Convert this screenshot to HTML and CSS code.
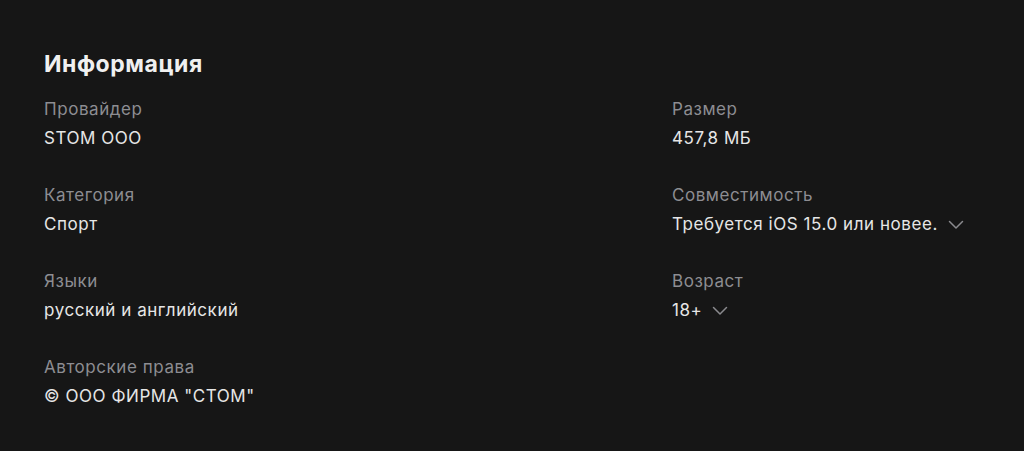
FILE: index.html
```html
<!DOCTYPE html>
<html lang="ru">
<head>
<meta charset="utf-8">
<link rel="stylesheet" href="styles.css">
</head>
<body>
<section class="info">
  <h2 class="info-title">Информация</h2>
  <div class="info-grid">
    <div class="info-item">
      <div class="info-label">Провайдер</div>
      <div class="info-value">STOM OOO</div>
    </div>
    <div class="info-item">
      <div class="info-label">Размер</div>
      <div class="info-value">457,8 МБ</div>
    </div>
    <div class="info-item">
      <div class="info-label">Категория</div>
      <div class="info-value">Спорт</div>
    </div>
    <div class="info-item">
      <div class="info-label">Совместимость</div>
      <div class="info-value">Требуется iOS 15.0 или новее.<svg class="chev" viewBox="0 0 16 10" width="16" height="10"><path d="M1.5 1.5 L8 8 L14.5 1.5" fill="none" stroke="#8a8a8e" stroke-width="1.5" stroke-linecap="round" stroke-linejoin="round"/></svg></div>
    </div>
    <div class="info-item">
      <div class="info-label">Языки</div>
      <div class="info-value">русский и английский</div>
    </div>
    <div class="info-item">
      <div class="info-label">Возраст</div>
      <div class="info-value">18+<svg class="chev" viewBox="0 0 16 10" width="16" height="10"><path d="M1.5 1.5 L8 8 L14.5 1.5" fill="none" stroke="#8a8a8e" stroke-width="1.5" stroke-linecap="round" stroke-linejoin="round"/></svg></div>
    </div>
    <div class="info-item">
      <div class="info-label">Авторские права</div>
      <div class="info-value">© ООО ФИРМА "СТОМ"</div>
    </div>
  </div>
</section>
</body>
</html>
```

FILE: styles.css
```css
html, body {
  margin: 0;
  padding: 0;
  background: #161616;
}
body {
  font-family: Inter, "Noto Sans", sans-serif;
  color: #e8e8e8;
  height: 451px;
  overflow: hidden;
}
.info {
  padding: 50px 0 0 44px;
}
.info-title {
  margin: 0;
  font-size: 23px;
  line-height: 28px;
  font-weight: 700;
  color: #f0f0f0;
  letter-spacing: 0.55px;
}
.info-grid {
  margin-top: 21px;
  display: grid;
  grid-template-columns: 628px 1fr;
  row-gap: 37px;
}
.info-label {
  font-size: 17px;
  line-height: 20px;
  color: #8d8d92;
  letter-spacing: 0.55px;
}
.info-value {
  margin-top: 9px;
  font-size: 17px;
  line-height: 20px;
  color: #e6e6e6;
  letter-spacing: 0.55px;
  display: flex;
  align-items: center;
}
.chev {
  margin-left: 10px;
  margin-top: 1px;
}
```
